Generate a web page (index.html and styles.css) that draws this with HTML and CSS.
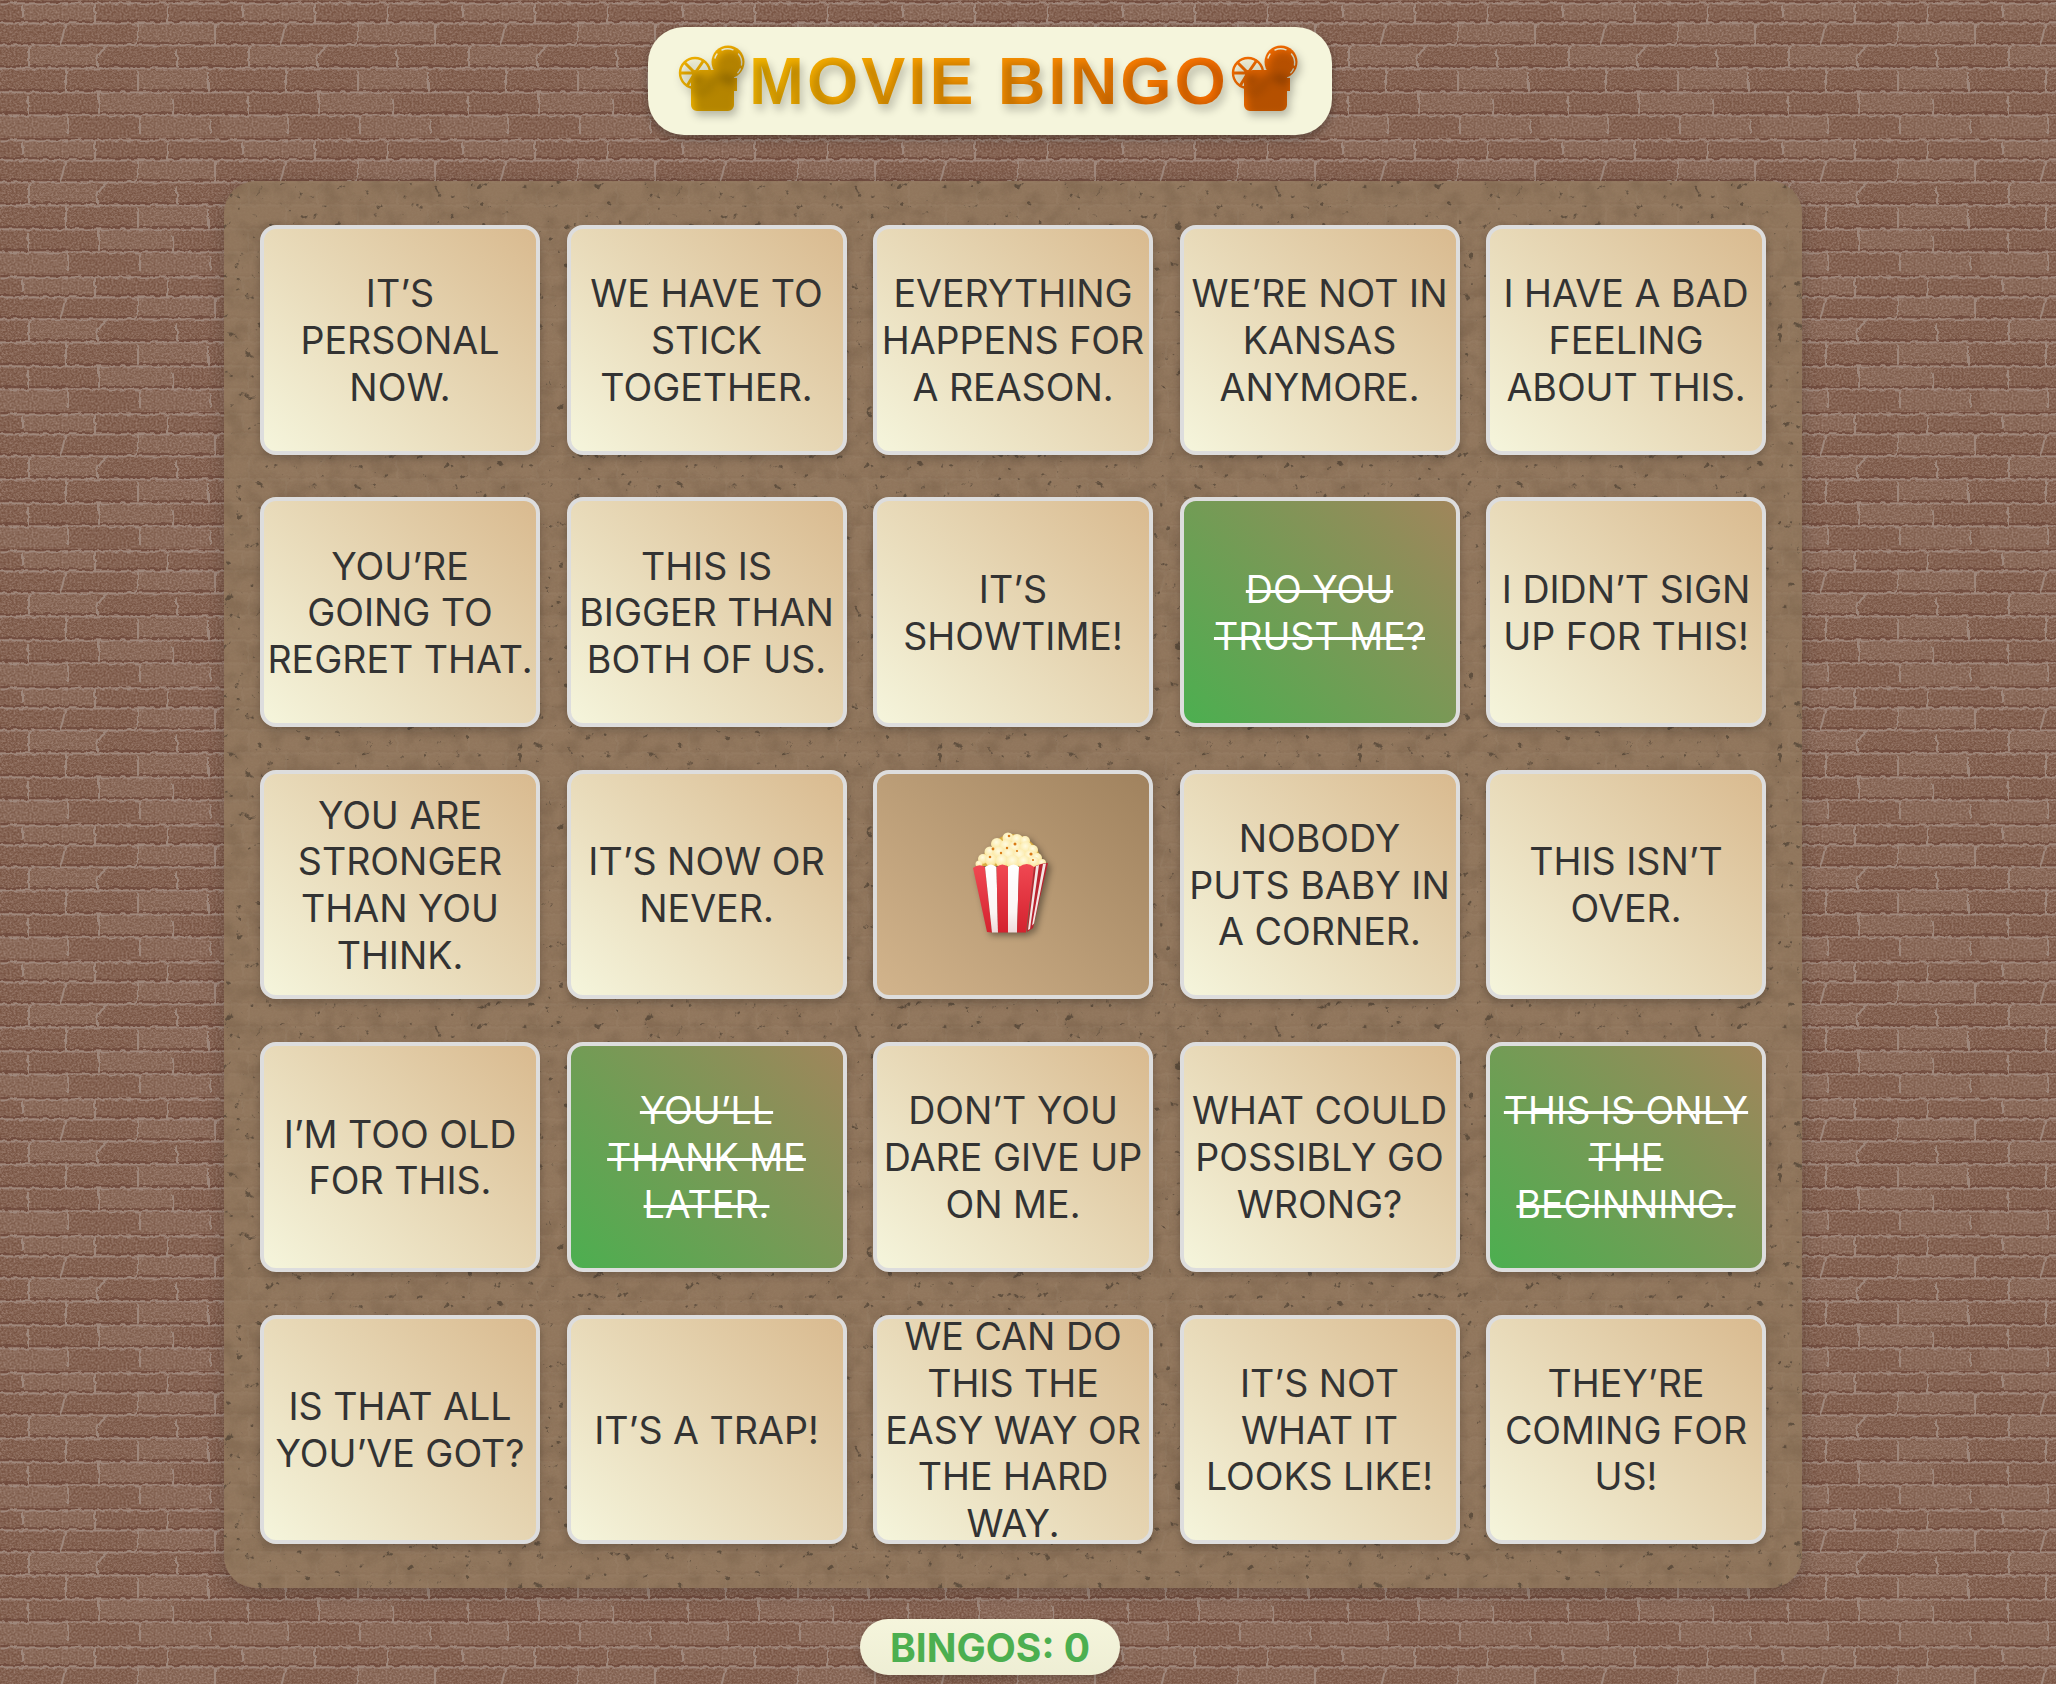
FILE: index.html
```html
<!DOCTYPE html>
<html lang="en">
<head>
  <meta charset="UTF-8" />
  <meta name="viewport" content="width=device-width, initial-scale=1.0" />
  <title>Movie Bingo</title>
  <link rel="stylesheet" href="styles.css">
</head>
<body>
  <svg class="defs" width="0" height="0" aria-hidden="true">
    <defs>
      <filter id="soft" x="-30%" y="-30%" width="170%" height="170%"><feGaussianBlur stdDeviation="4" /></filter>
      <linearGradient id="reelYellow" gradientUnits="userSpaceOnUse" x1="18" y1="84" x2="84" y2="16">
        <stop offset="0" stop-color="#f2b600" />
        <stop offset="1" stop-color="#eeaa00" />
      </linearGradient>
      <linearGradient id="reelOrange" gradientUnits="userSpaceOnUse" x1="18" y1="84" x2="84" y2="16">
        <stop offset="0" stop-color="#f06c00" />
        <stop offset="1" stop-color="#f46a00" />
      </linearGradient>
      <g id="projector">
        <path stroke="none" d="M40 40h24q10 0 10 8h3v13h-3v14a6 6 0 0 1-6 6h-31a6 6 0 0 1-6-6v-24q0-11 9-11z" />
        <g fill="none">
          <circle cx="35" cy="43" r="15" stroke-width="2.400" />
          <path stroke-width="3" d="M35 43L44 30M35 43L24 32M35 43H20M35 43L27 56" />
        </g>
        <circle cx="35" cy="43" r="3" stroke="none" />
        <circle cx="68" cy="32" r="16.500" stroke="none" />
      </g>
      <g id="reelMarks" fill="none" stroke="#f5f5dc" stroke-width="1.400" stroke-linecap="round">
        <path d="M62 20a13.800 13.800 0 0 1 11-.2" />
        <path d="M78.500 24a13.800 13.800 0 0 1 3 11" />
        <path d="M80.300 39a13.800 13.800 0 0 1-2.500 3.800" />
        <path d="M55 28a13.800 13.800 0 0 1 2-4" />
      </g>
    </defs>
  </svg>

  <header class="title-pill">
    <svg class="projector" viewBox="18 16 66 70" aria-hidden="true">
      <use href="#projector" fill="url(#reelYellow)" stroke="url(#reelYellow)" />
      <use href="#reelMarks" />
      <use href="#projector" class="reel-shade" filter="url(#soft)" transform="translate(3 5)" />
    </svg>
    <h1>MOVIE BINGO</h1>
    <svg class="projector" viewBox="18 16 66 70" aria-hidden="true">
      <use href="#projector" fill="url(#reelOrange)" stroke="url(#reelOrange)" />
      <use href="#reelMarks" />
      <use href="#projector" class="reel-shade" filter="url(#soft)" transform="translate(3 5)" />
    </svg>
  </header>

  <main class="board">
    <div class="card">IT’S PERSONAL NOW.</div>
    <div class="card">WE HAVE TO STICK TOGETHER.</div>
    <div class="card">EVERYTHING HAPPENS FOR A REASON.</div>
    <div class="card">WE’RE NOT IN KANSAS ANYMORE.</div>
    <div class="card">I HAVE A BAD FEELING ABOUT THIS.</div>

    <div class="card">YOU’RE GOING TO REGRET THAT.</div>
    <div class="card">THIS IS BIGGER THAN BOTH OF US.</div>
    <div class="card">IT’S SHOWTIME!</div>
    <div class="card marked"><span>DO YOU TRUST ME?</span></div>
    <div class="card">I DIDN’T SIGN UP FOR THIS!</div>

    <div class="card">YOU ARE STRONGER THAN YOU THINK.</div>
    <div class="card">IT’S NOW OR NEVER.</div>
    <div class="card free">
      <svg class="popcorn" viewBox="0 0 120 130" role="img" aria-label="Popcorn">
        <defs>
          <radialGradient id="kernel" cx="45%" cy="35%" r="75%">
            <stop offset="0" stop-color="#fffbe0" />
            <stop offset=".7" stop-color="#fbe8a4" />
            <stop offset="1" stop-color="#e3bb55" />
          </radialGradient>
          <linearGradient id="redFront" x1="0" y1="0" x2="0" y2="1">
            <stop offset="0" stop-color="#f04852" />
            <stop offset="1" stop-color="#d4222f" />
          </linearGradient>
          <linearGradient id="whiteFront" x1="0" y1="0" x2="0" y2="1">
            <stop offset="0" stop-color="#ffffff" />
            <stop offset=".7" stop-color="#fbf6f4" />
            <stop offset="1" stop-color="#eed9da" />
          </linearGradient>
        </defs>
        <path fill="#d9ab3f" d="M24 46q4-12 14-18q10-14 18-14q14 0 22 8q8 6 12 24z" />
        <g fill="url(#kernel)">
          <circle cx="55" cy="18" r="5.500" /><circle cx="64" cy="20" r="6" /><circle cx="72" cy="21" r="5" />
          <circle cx="44" cy="24" r="6" /><circle cx="53" cy="26" r="6.500" /><circle cx="62" cy="28" r="7" />
          <circle cx="73" cy="28" r="6.500" /><circle cx="80" cy="30" r="5" /><circle cx="37" cy="32" r="5.500" />
          <circle cx="46" cy="33" r="6.500" /><circle cx="56" cy="35" r="7" /><circle cx="67" cy="36" r="7" />
          <circle cx="77" cy="36" r="6" /><circle cx="84" cy="38" r="5" /><circle cx="30" cy="39" r="5" />
          <circle cx="38" cy="40" r="6" /><circle cx="49" cy="41" r="6.500" /><circle cx="60" cy="42" r="7" />
          <circle cx="71" cy="42" r="6.500" /><circle cx="81" cy="42" r="5.500" /><circle cx="89" cy="43" r="4" />
          <circle cx="26" cy="44" r="3.500" />
        </g>
        <g fill="#d97a16">
          <circle cx="56" cy="16" r="1.300" /><circle cx="40" cy="29" r="1.400" /><circle cx="62" cy="24" r="1.500" />
          <circle cx="48" cy="33" r="1.200" /><circle cx="37" cy="37" r="1.300" /><circle cx="78" cy="34" r="1.600" />
          <circle cx="64" cy="31" r="1.100" /><circle cx="54" cy="28" r="1.200" /><circle cx="80" cy="40" r="1.100" />
        </g>
        <path fill="#b9242f" d="M81 47q7-4 14-4l-15 65l-6 4z" />
        <path fill="#f3e6e4" d="M83 46l3-1l-9 64l-2 1zM90 44l3-.600l-12 60l-2 2z" />
        <path fill="url(#redFront)" d="M20 48q6-5 12-1l7 65.500l-5-.500z" />
        <path fill="url(#whiteFront)" d="M32 47q6-5 11.500 0l1.500 65.500h-6z" />
        <path fill="url(#redFront)" d="M43.500 47q6-5 11.500 0v65.500h-10z" />
        <path fill="url(#whiteFront)" d="M55 47q5.500-5 11 0l-2 65.500h-9z" />
        <path fill="url(#redFront)" d="M66 47q8-6 15 0l-8 65.500h-9z" />
      </svg>
    </div>
    <div class="card">NOBODY PUTS BABY IN A CORNER.</div>
    <div class="card">THIS ISN’T OVER.</div>

    <div class="card">I’M TOO OLD FOR THIS.</div>
    <div class="card marked"><span>YOU’LL THANK ME LATER.</span></div>
    <div class="card">DON’T YOU DARE GIVE UP ON ME.</div>
    <div class="card">WHAT COULD POSSIBLY GO WRONG?</div>
    <div class="card marked"><span>THIS IS ONLY THE BEGINNING.</span></div>

    <div class="card">IS THAT ALL YOU’VE GOT?</div>
    <div class="card">IT’S A TRAP!</div>
    <div class="card">WE CAN DO THIS THE EASY WAY OR THE HARD WAY.</div>
    <div class="card">IT’S NOT WHAT IT LOOKS LIKE!</div>
    <div class="card">THEY’RE COMING FOR US!</div>
  </main>

  <footer class="score">BINGOS: 0</footer>
</body>
</html>
```

FILE: styles.css
```css
html, body {
  margin: 0;
  padding: 0;
}

body {
  padding: 27px 0 9px;
  font-family: Inter, 'Noto Sans', sans-serif;
  background-color: #7c5847;
  background-image: url("data:image/svg+xml,%3Csvg xmlns='http://www.w3.org/2000/svg' width='220' height='137'%3E%3Cfilter id='j' x='0' y='0' width='100%25' height='100%25'%3E%3CfeTurbulence type='fractalNoise' baseFrequency='.16' numOctaves='2' seed='4' stitchTiles='stitch' result='t'/%3E%3CfeDisplacementMap in='SourceGraphic' in2='t' scale='5'/%3E%3CfeGaussianBlur stdDeviation='.5'/%3E%3C/filter%3E%3Cfilter id='n' x='0' y='0' width='100%25' height='100%25' color-interpolation-filters='sRGB'%3E%3CfeTurbulence type='fractalNoise' baseFrequency='.5' numOctaves='2' seed='8' stitchTiles='stitch'/%3E%3CfeColorMatrix values='0 0 0 0 1 0 0 0 0 .95 0 0 0 0 .92 1.800 0 0 0 -.6'/%3E%3C/filter%3E%3Crect width='220' height='137' fill='%237a5645'/%3E%3Cg fill='%23fff' fill-opacity='.05'%3E%3Crect x='23' y='4' width='72' height='18'/%3E%3Crect x='138' y='25' width='77' height='19'/%3E%3Crect x='29' y='47' width='68' height='20'/%3E%3Crect x='138' y='70' width='70' height='21'/%3E%3Crect x='99' y='94' width='74' height='20'/%3E%3Crect x='0' y='117' width='68' height='19'/%3E%3Crect x='140' y='117' width='70' height='19'/%3E%3C/g%3E%3Crect width='220' height='137' filter='url(%23n)' opacity='.26'/%3E%3Cg filter='url(%23j)' fill='none' stroke-linecap='round'%3E%3Cpath stroke='%236d4838' stroke-width='1.500' d='M0 1H220M0 21H220M0 43H220M0 66H220M0 90H220M0 113H220'/%3E%3Cpath stroke='%239f887c' stroke-width='2' d='M0 3.500H220M0 23.500H220M0 45.500H220M0 68.500H220M0 92.500H220M0 115.500H220M23 6V18M95 5V22M167 6V22M65 25Q63 38 60 44M138 25V38Q136 44 130 45M215 25V44M29 47V66M97 66Q96 52 108 47M177 50V66M66 70V91M138 72V90M208 72V90M28 96V113M99 94V113M173 100V114M68 117V134M140 117V134M210 120V134'/%3E%3C/g%3E%3C/svg%3E");
}

.defs {
  position: absolute;
}

.title-pill {
  box-sizing: border-box;
  width: 684px;
  height: 108px;
  margin-left: 648px;
  padding-left: 30px;
  display: flex;
  align-items: center;
  gap: 5px;
  background: #f5f5dc;
  border-radius: 36px;
  box-shadow: 0 4px 10px rgba(0, 0, 0, 0.3);
}

.title-pill h1 {
  margin: 0;
  width: 477px;
  font-family: 'Liberation Sans', Arial, sans-serif;
  font-size: 66px;
  font-weight: 700;
  letter-spacing: 2.950px;
  line-height: 76px;
  white-space: nowrap;
  color: transparent;
  background: linear-gradient(100deg, #f2b600, #f76c00);
  -webkit-background-clip: text;
  background-clip: text;
  text-shadow: 3px 6px 9px rgba(0, 0, 0, 0.22);
}

.projector {
  flex: none;
  width: 66px;
  height: 70px;
  overflow: visible;
}

.reel-shade {
  fill: rgba(0, 0, 0, 0.25);
  stroke: rgba(0, 0, 0, 0.25);
}

.board {
  box-sizing: border-box;
  width: 1578px;
  height: 1407px;
  margin: 46px 0 31px 224px;
  padding: 44px 36px;
  display: grid;
  grid-template-columns: repeat(5, 280px);
  grid-auto-rows: 229.600px;
  column-gap: 26.500px;
  row-gap: 42.800px;
  border-radius: 32px;
  background-color: rgba(146, 121, 94, 0.9);
  background-image: url("data:image/svg+xml,%3Csvg xmlns='http://www.w3.org/2000/svg' width='420' height='420'%3E%3Cfilter id='s' x='0' y='0' width='100%25' height='100%25' color-interpolation-filters='sRGB'%3E%3CfeTurbulence type='fractalNoise' baseFrequency='.1' numOctaves='4' seed='11' stitchTiles='stitch'/%3E%3CfeColorMatrix values='0 0 0 0 .25 0 0 0 0 .21 0 0 0 0 .17 11 0 0 0 -7.900'/%3E%3CfeGaussianBlur stdDeviation='.7'/%3E%3C/filter%3E%3Cfilter id='f' x='0' y='0' width='100%25' height='100%25' color-interpolation-filters='sRGB'%3E%3CfeTurbulence type='fractalNoise' baseFrequency='.05' numOctaves='5' seed='5' stitchTiles='stitch'/%3E%3CfeColorMatrix values='0 0 0 0 .36 0 0 0 0 .28 0 0 0 0 .2 2.400 0 0 0 -1'/%3E%3C/filter%3E%3Crect width='420' height='420' filter='url(%23f)' opacity='.22'/%3E%3Crect width='420' height='420' filter='url(%23s)' opacity='.6'/%3E%3C/svg%3E");
  box-shadow: 0 6px 18px rgba(0, 0, 0, 0.2);
}

.card {
  box-sizing: border-box;
  padding: 3px 2px 0;
  display: flex;
  align-items: center;
  justify-content: center;
  text-align: center;
  font-size: 37.600px;
  line-height: 46.700px;
  color: #333;
  background: linear-gradient(45deg, #f5f5dc, #d9ba8f);
  border: 4px solid #ddd;
  border-radius: 16px;
  box-shadow: 0 4px 8px rgba(0, 0, 0, 0.2);
}

.marked {
  color: #fff;
  background: linear-gradient(45deg, #4caf50, #a0855b);
}

.marked span {
  text-decoration: line-through;
  text-decoration-thickness: 3px;
}

.free {
  padding: 0;
  background: linear-gradient(45deg, #d2b48c, #a0825e);
}

.popcorn {
  width: 120px;
  height: 130px;
  filter: drop-shadow(3px 3px 3px rgba(0, 0, 0, 0.4));
}

.score {
  box-sizing: border-box;
  width: 260px;
  height: 56px;
  margin-left: 860px;
  display: flex;
  align-items: center;
  justify-content: center;
  font-size: 39px;
  font-weight: 700;
  color: #4caf50;
  background: linear-gradient(#f5f5dc, #eeeed4);
  border-radius: 28px;
  box-shadow: 0 4px 8px rgba(0, 0, 0, 0.2);
}
```
